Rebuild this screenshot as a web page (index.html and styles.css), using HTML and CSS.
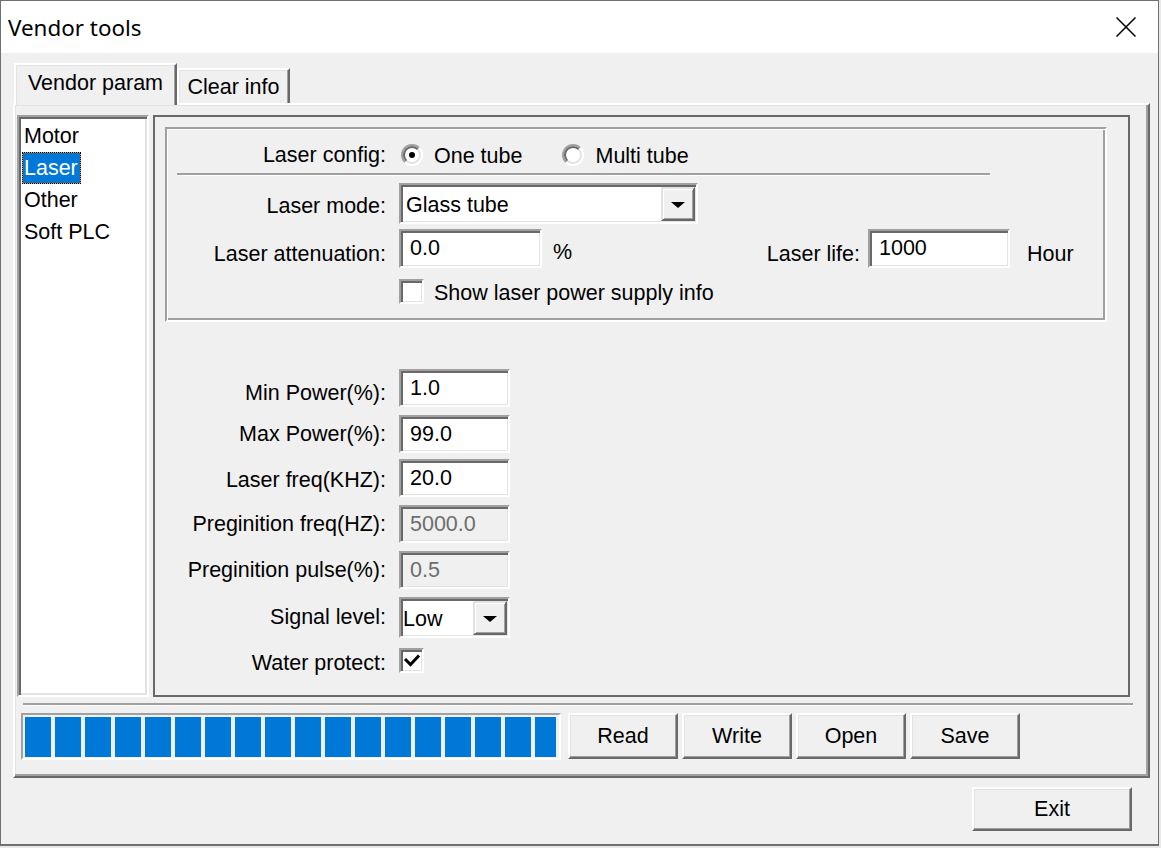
FILE: index.html
```html
<!DOCTYPE html>
<html>
<head>
<meta charset="utf-8">
<title>Vendor tools</title>
<link rel="stylesheet" href="styles.css">
</head>
<body>
<div class="window">
  <div class="titlebar">
    <span class="title">Vendor tools</span>
    <svg class="close" width="20" height="20" viewBox="0 0 20 20"><path d="M0.5 0.5 L19.5 19.5 M19.5 0.5 L0.5 19.5" stroke="#000" stroke-width="1.5" fill="none"/></svg>
  </div>
  <div class="content">
    <div class="tabs">
      <div class="tab active">Vendor param</div>
      <div class="tab inactive">Clear info</div>
    </div>
    <div class="panel">
      <div class="main-row">
        <div class="listbox">
          <div class="item">Motor</div>
          <div class="item selected">Laser</div>
          <div class="item">Other</div>
          <div class="item">Soft PLC</div>
        </div>
        <div class="frame">
          <div class="group">
            <div class="grow r1">
              <span class="glabel">Laser config:</span>
              <span class="radio first"><span class="ring"><span class="dot"></span></span></span>
              <span class="rtext">One tube</span>
              <span class="radio second"><span class="ring"></span></span>
              <span class="rtext">Multi tube</span>
            </div>
            <div class="gsep"></div>
            <div class="grow r2">
              <span class="glabel pt6">Laser mode:</span>
              <div class="combo wide"><span class="ctext glass">Glass tube</span><span class="dropbtn"><span class="arrow"></span></span></div>
            </div>
            <div class="grow r3">
              <span class="glabel pt12">Laser attenuation:</span>
              <div class="edit att">0.0</div>
              <span class="unit pct pt8">%</span>
              <span class="life-label pt12">Laser life:</span>
              <div class="edit life">1000</div>
              <span class="unit hour pt12">Hour</span>
            </div>
            <div class="grow r4">
              <span class="check gcheck"></span>
              <span class="ctext2 pt3">Show laser power supply info</span>
            </div>
          </div>
          <div class="fields">
            <div class="frow f1"><span class="flabel pt10">Min Power(%):</span><div class="edit fedit">1.0</div></div>
            <div class="frow f2"><span class="flabel">Max Power(%):</span><div class="edit fedit">99.0</div></div>
            <div class="frow f3"><span class="flabel pt4">Laser freq(KHZ):</span><div class="edit fedit">20.0</div></div>
            <div class="frow f4"><span class="flabel">Preginition freq(HZ):</span><div class="edit fedit disabled">5000.0</div></div>
            <div class="frow f5"><span class="flabel">Preginition pulse(%):</span><div class="edit fedit disabled">0.5</div></div>
            <div class="frow f6"><span class="flabel">Signal level:</span><div class="combo small"><span class="ctext">Low</span><span class="dropbtn"><span class="arrow"></span></span></div></div>
            <div class="frow f7"><span class="flabel pt6">Water protect:</span><span class="check fcheck"><svg width="21" height="21" viewBox="0 0 21 21"><path d="M4 9 L9.5 14.5 L18 5.5" stroke="#000" stroke-width="3" fill="none"/></svg></span></div>
          </div>
        </div>
      </div>
      <div class="sep"></div>
      <div class="bottom-row">
        <div class="progress">
          <div class="blocks">
            <span></span><span></span><span></span><span></span><span></span><span></span>
            <span></span><span></span><span></span><span></span><span></span><span></span>
            <span></span><span></span><span></span><span></span><span></span><span></span>
          </div>
        </div>
        <div class="buttons">
          <button class="btn">Read</button>
          <button class="btn">Write</button>
          <button class="btn">Open</button>
          <button class="btn">Save</button>
        </div>
      </div>
    </div>
    <div class="exit-row"><button class="btn exit">Exit</button></div>
  </div>
</div>
</body>
</html>
```

FILE: styles.css
```css
* { box-sizing: border-box; }
html, body { margin: 0; padding: 0; }
body {
  background: #e9e9e9;
  font-family: "Liberation Sans", Arial, sans-serif;
  font-size: 21.5px;
  color: #000;
  width: 1161px;
  height: 848px;
  overflow: hidden;
}
.window {
  width: 1159px;
  height: 846px;
  border: 1px solid #707070;
  border-bottom-width: 2px;
  background: #f0f0f0;
  display: flex;
  flex-direction: column;
}
.titlebar {
  height: 52px;
  flex-shrink: 0;
  background: #fff;
  display: flex;
  align-items: center;
  justify-content: space-between;
  padding-left: 7px;
  padding-right: 22px;
}
.title {
  font-family: "Noto Sans", sans-serif;
  font-size: 22.4px;
  line-height: 30px;
  padding-top: 1px;
}
.close { display: block; }

.content {
  padding: 10px 0 0 12px;
  display: flex;
  flex-direction: column;
}

/* tabs */
.tabs {
  height: 40px;
  display: flex;
  align-items: flex-end;
  padding-left: 1px;
}
.tab {
  border-top: 2px solid #fff;
  border-left: 2px solid #fff;
  border-right: 2px solid #696969;
  box-shadow: inset -1px 0 0 #a0a0a0, inset 1px 1px 0 #e3e3e3;
  line-height: 25px;
  text-align: center;
  background: #f0f0f0;
}
.tab.active {
  width: 163px;
  height: 42px;
  margin-bottom: -2px;
  padding-top: 6px;
  position: relative;
  z-index: 1;
}
.tab.inactive {
  width: 113px;
  height: 35px;
  padding-top: 5px;
}

/* panel */
.panel {
  width: 1137px;
  height: 675px;
  border-style: solid;
  border-width: 2px;
  border-color: #fff #696969 #696969 #fff;
  box-shadow: inset -2px -2px 0 #a0a0a0, inset 1px 1px 0 #e3e3e3;
  padding: 10px 0 0 2px;
  display: flex;
  flex-direction: column;
}
.main-row {
  display: flex;
  gap: 4px;
  height: 582px;
}

/* sunken 3d */
.listbox, .edit, .combo, .check, .progress {
  border-style: solid;
  border-width: 2px;
  border-color: #a0a0a0 #fff #fff #a0a0a0;
}
.listbox {
  width: 132px;
  height: 582px;
  background: #fff;
  box-shadow: inset 2px 2px 0 #696969, inset -2px -2px 0 #e3e3e3;
  padding: 3px 0 0 3px;
}
.item {
  width: fit-content;
  height: 32px;
  line-height: 32px;
  padding: 0 3px 0 2px;
  white-space: nowrap;
}
.item.selected {
  background: #0078d7;
  color: #fff;
  outline: 1px dotted #000;
  outline-offset: -1px;
  box-shadow: inset 0 0 0 1px #ff9a3c;
}

.frame {
  width: 977px;
  height: 582px;
  border: 2px solid #696969;
  padding: 10px 0 0 0;
}

/* group box */
.group {
  margin-left: 10px;
  width: 942px;
  height: 195px;
  border-style: solid;
  border-width: 2px;
  border-color: #a0a0a0 #fff #fff #a0a0a0;
  box-shadow: inset 1px 1px 0 #fff, inset -2px -2px 0 #a0a0a0;
  display: flex;
  flex-direction: column;
}
.grow {
  display: flex;
  align-items: center;
  white-space: nowrap;
}
.glabel {
  width: 219px;
  flex-shrink: 0;
  text-align: right;
  line-height: 25px;
}
.r1 { margin-top: 8px; height: 36px; }
.r2 { margin-top: 7px; height: 41px; }
.r3 { margin-top: 5px; height: 39px; }
.r4 { margin-top: 11px; height: 25px; }

.pt3 { padding-top: 3px; }
.pt4 { padding-top: 4px; }
.pt6 { padding-top: 6px; }
.pt8 { padding-top: 8px; }
.pt10 { padding-top: 10px; }
.pt12 { padding-top: 12px; }

.radio {
  width: 22px;
  height: 22px;
  flex-shrink: 0;
  border-radius: 50%;
  border: 2px solid;
  border-color: #a0a0a0 #fff #fff #a0a0a0;
  display: flex;
  align-items: center;
  justify-content: center;
}
.radio.first { margin-left: 15px; }
.radio.second { margin-left: 40px; }
.ring {
  width: 18px;
  height: 18px;
  border-radius: 50%;
  border: 2px solid;
  border-color: #696969 #e3e3e3 #e3e3e3 #696969;
  background: #fff;
  display: flex;
  align-items: center;
  justify-content: center;
}
.dot {
  width: 6px;
  height: 6px;
  border-radius: 50%;
  background: #000;
}
.rtext { margin-left: 11px; line-height: 25px; padding-top: 2px; }

.gsep {
  margin-left: 10px;
  width: 813px;
  height: 3px;
  border-top: 2px solid #a0a0a0;
  border-bottom: 1px solid #fff;
}

/* combo */
.combo {
  background: #fff;
  box-shadow: inset 2px 2px 0 #696969, inset -1px -1px 0 #e3e3e3;
  padding: 2px 1px 1px 2px;
  display: flex;
  margin-left: 13px;
  flex-shrink: 0;
}
.combo.wide { width: 299px; height: 41px; }
.combo.small { width: 111px; height: 41px; }
.ctext {
  flex: 1;
  line-height: 34px;
  padding-top: 1px;
  white-space: nowrap;
}
.ctext.glass { padding-left: 3px; }
.dropbtn {
  width: 34px;
  height: 34px;
  flex-shrink: 0;
  background: #f0f0f0;
  border-style: solid;
  border-width: 2px;
  border-color: #e3e3e3 #696969 #696969 #e3e3e3;
  box-shadow: inset 1px 1px 0 #fff, inset -1px -1px 0 #a0a0a0;
  display: flex;
  align-items: center;
  justify-content: center;
  padding-top: 1px;
}
.arrow {
  width: 0;
  height: 0;
  border-left: 7px solid transparent;
  border-right: 7px solid transparent;
  border-top: 6px solid #000;
}

/* edit */
.edit {
  background: #fff;
  box-shadow: inset 2px 2px 0 #696969, inset -1px -1px 0 #e3e3e3;
  padding-left: 9px;
  white-space: nowrap;
  flex-shrink: 0;
}
.edit.att { margin-left: 13px; width: 143px; height: 39px; line-height: 35px; }
.edit.life { margin-left: 8px; width: 142px; height: 39px; line-height: 35px; }
.edit.disabled { background: #f0f0f0; color: #6d6d6d; }

.unit { line-height: 25px; }
.pct { margin-left: 11px; width: 20px; }
.hour { margin-left: 17px; }
.life-label { width: 287px; text-align: right; line-height: 25px; }

/* checkbox */
.check {
  width: 25px;
  height: 25px;
  flex-shrink: 0;
  background: #fff;
  box-shadow: inset 2px 2px 0 #696969, inset -1px -1px 0 #e3e3e3;
}
.check svg { display: block; }
.gcheck { margin-left: 232px; }
.ctext2 { margin-left: 10px; line-height: 25px; }

/* fields */
.fields {
  margin-top: 47px;
  display: flex;
  flex-direction: column;
}
.frow {
  display: flex;
  align-items: center;
  white-space: nowrap;
}
.flabel {
  width: 231px;
  flex-shrink: 0;
  text-align: right;
  line-height: 25px;
}
.fedit {
  margin-left: 13px;
  width: 111px;
  height: 38px;
  line-height: 35px;
}
.fcheck { margin-left: 13px; }
.f1, .f2, .f3, .f4, .f5 { height: 38px; }
.f2 { margin-top: 8px; }
.f3 { margin-top: 6px; }
.f4 { margin-top: 8px; }
.f5 { margin-top: 8px; }
.f6 { margin-top: 8px; height: 41px; }
.f7 { margin-top: 10px; height: 25px; }

/* bottom */
.sep {
  margin: 6px 0 0 6px;
  width: 1110px;
  height: 3px;
  flex-shrink: 0;
  border-top: 2px solid #a0a0a0;
  border-bottom: 1px solid #fff;
}
.bottom-row {
  margin: 7px 0 0 4px;
  display: flex;
  height: 47px;
}
.progress {
  width: 540px;
  height: 47px;
  background: #f0f0f0;
  padding: 2px 3px 1px 2px;
}
.blocks {
  display: flex;
  width: 531px;
  height: 40px;
  overflow: hidden;
}
.blocks span {
  flex: 0 0 26px;
  height: 40px;
  margin-right: 4px;
  background: #0078d7;
}
.buttons {
  margin-left: 7px;
  display: flex;
  gap: 4px;
}
.btn {
  font: inherit;
  color: #000;
  margin: 0;
  padding: 0;
  width: 110px;
  height: 46px;
  background: #f0f0f0;
  border-style: solid;
  border-width: 2px;
  border-color: #fff #696969 #696969 #fff;
  box-shadow: inset -1px -1px 0 #a0a0a0, inset 1px 1px 0 #e3e3e3;
  line-height: 25px;
  text-align: center;
}
.exit-row {
  margin-top: 9px;
  display: flex;
  justify-content: flex-end;
  padding-right: 26px;
}
.btn.exit { width: 160px; height: 44px; }
```
